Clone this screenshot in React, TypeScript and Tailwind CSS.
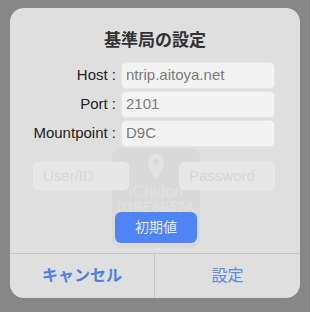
import React from "react"

const font = { fontFamily: '"Liberation Sans", "Noto Sans CJK JP", sans-serif' }

function Row({ label, value }: { label: string; value: string }) {
  return (
    <div className="flex items-center h-[27px]">
      <div className="w-[111px] pr-[5px] text-right text-[15px] text-[#222]">{label}</div>
      <div className="w-[154px] h-full rounded-[5px] bg-[#f3f3f3] border border-[#e6e6e6] flex items-center px-[4px] text-[15px] text-[#7a7a7a]">
        {value}
      </div>
    </div>
  )
}

export default function App() {
  return (
    <div className="w-[310px] h-[312px] bg-[#878787] pt-[8px] pl-[10px]" style={font}>
      <div className="relative w-[290px] h-[290px] rounded-[14px] bg-[#dfdfdf] overflow-hidden flex flex-col">
        {/* faint card behind the dialog */}
        <div className="absolute left-[102px] top-[140px] w-[88px] h-[100px] rounded-[9px] bg-[#d9d9d9] flex flex-col items-center pt-[5px]">
          <svg width="18" height="28" viewBox="0 0 18 28">
            <path d="M9 1C4.4 1 1 4.6 1 9.2 1 15.5 9 27 9 27s8-11.5 8-17.8C17 4.6 13.6 1 9 1z" fill="#e2e2e2" />
            <circle cx="9" cy="9" r="3" fill="#d9d9d9" />
          </svg>
          <div className="mt-[3px] text-[16px] leading-[16px] text-[#e1e1e1]">iChidori</div>
          <div className="text-[14px] leading-[15px] text-[#e1e1e1]">01BE6B52A</div>
        </div>

        <div className="relative pt-[23px] h-[54px] text-center text-[17px] leading-[20px] font-bold text-[#333]">
          基準局の設定
        </div>

        <div className="relative flex flex-col gap-[2px]">
          <Row label="Host :" value="ntrip.aitoya.net" />
          <Row label="Port :" value="2101" />
          <Row label="Mountpoint :" value="D9C" />
        </div>

        <div className="relative flex justify-between pl-[23px] pr-[25px] mt-[15px]">
          <div className="w-[96px] h-[28px] rounded-[5px] bg-[#e6e6e6] border border-[#e9e9e9] flex items-center px-[9px] text-[15px] text-[#d6d6d6]">
            User/ID
          </div>
          <div className="w-[96px] h-[28px] rounded-[5px] bg-[#e6e6e6] border border-[#e9e9e9] flex items-center px-[9px] text-[15px] text-[#d6d6d6]">
            Password
          </div>
        </div>

        <div className="relative flex justify-center mt-[22px] pl-[2px]">
          <div className="w-[82px] h-[31px] rounded-[6px] bg-[#4f84f6] flex items-center justify-center text-[14px] text-[#e4ebfb]">
            初期値
          </div>
        </div>

        <div className="relative mt-[10px] flex flex-1 border-t border-[#c6c6c6]">
          <div className="w-[145px] flex items-center justify-center border-r border-[#c6c6c6] text-[16px] font-bold text-[#4b80e6]">
            キャンセル
          </div>
          <div className="flex-1 flex items-center justify-center text-[16px] text-[#5a8ae6]">設定</div>
        </div>
      </div>
    </div>
  )
}
